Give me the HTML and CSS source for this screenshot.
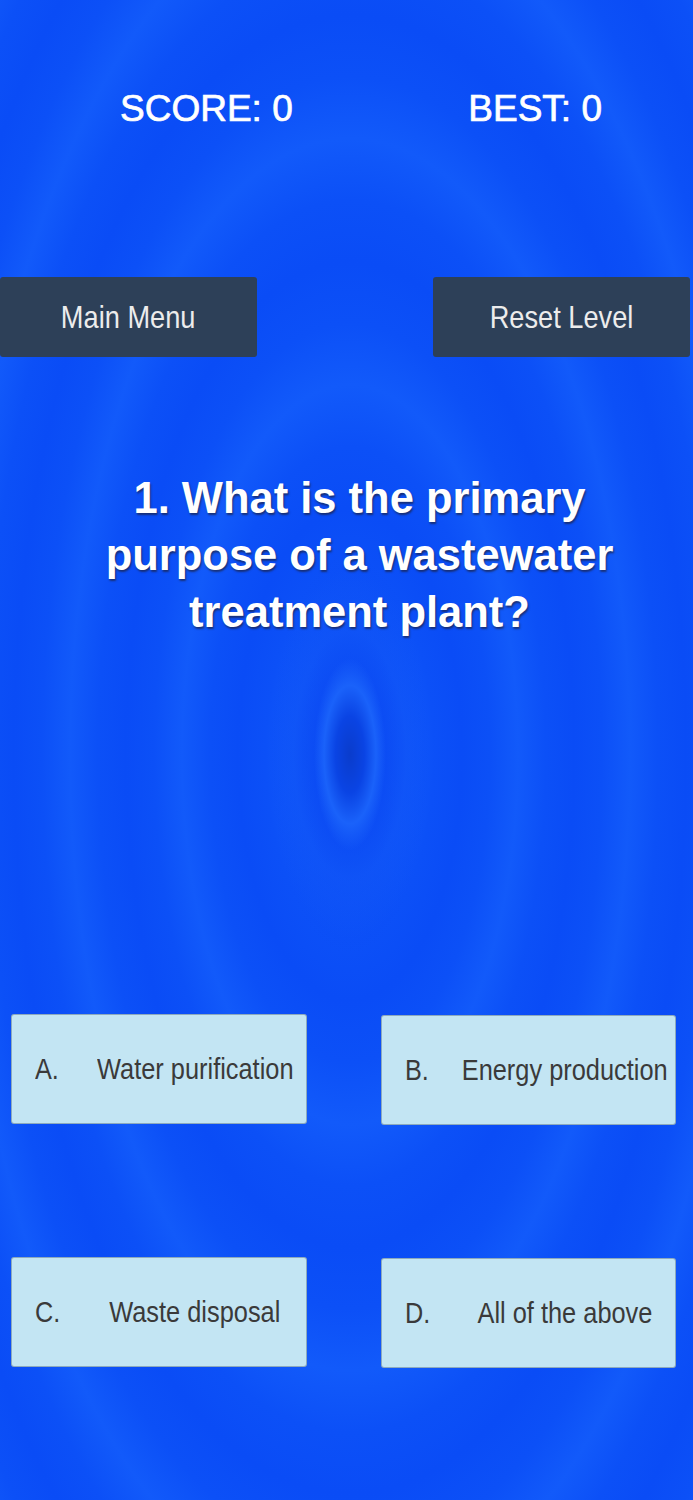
FILE: index.html
```html
<!DOCTYPE html>
<html lang="en">
<head>
  <meta charset="UTF-8">
  <meta name="viewport" content="width=device-width, initial-scale=1.0">
  <title>Water Quiz</title>
  <link rel="stylesheet" href="styles.css">
</head>
<body>
  <div class="screen">
    <div class="scores">
      <span class="score">SCORE: 0</span>
      <span class="score">BEST: 0</span>
    </div>

    <div class="nav">
      <button class="nav-btn"><span class="squish">Main Menu</span></button>
      <button class="nav-btn"><span class="squish">Reset Level</span></button>
    </div>

    <h1 class="question">1. What is the primary purpose of a wastewater treatment plant?</h1>

    <div class="answers">
      <button class="answer">
        <span class="letter">A.</span>
        <span class="answer-text"><span class="squish">Water purification</span></span>
      </button>
      <button class="answer answer-right">
        <span class="letter">B.</span>
        <span class="answer-text"><span class="squish">Energy production</span></span>
      </button>
      <button class="answer">
        <span class="letter">C.</span>
        <span class="answer-text"><span class="squish">Waste disposal</span></span>
      </button>
      <button class="answer answer-right">
        <span class="letter">D.</span>
        <span class="answer-text"><span class="squish">All of the above</span></span>
      </button>
    </div>
  </div>
</body>
</html>
```

FILE: styles.css
```css
body {
  margin: 0;
  padding: 0;
  font-family: "Liberation Sans", Arial, sans-serif;
  background-color: #0a50f7;
}

.screen {
  min-height: 1500px;
  box-sizing: border-box;
  padding-top: 87px;
  background:
    radial-gradient(ellipse 36px 96px at 50.5% 50.3%, #0a3ccc 0%, #0a44e4 40%, #1a62fa 72%, rgba(26, 98, 250, 0) 100%),
    radial-gradient(ellipse 80px 200px at 50.5% 50.3%, rgba(10, 70, 240, 0.9) 0%, rgba(10, 70, 240, 0) 100%),
    repeating-radial-gradient(ellipse 350px 770px at 50.5% 50.3%,
      #0a4cf6 0%, #0c50f7 8%, #125afa 16%, #0c50f7 24%, #0a4cf6 32%),
    #0a50f7;
}

.scores {
  display: flex;
  justify-content: space-between;
  padding: 0 91px 0 120px;
}

.score {
  color: #fff;
  font-size: 37px;
  line-height: 44px;
  -webkit-text-stroke: 0.7px #fff;
}

.nav {
  display: flex;
  justify-content: space-between;
  margin-top: 146px;
  padding-right: 3px;
}

.nav-btn {
  width: 257px;
  height: 80px;
  padding: 0;
  border: none;
  border-radius: 3px;
  background-color: #2d4058;
  color: #ececec;
  font-family: "Liberation Sans", Arial, sans-serif;
  font-size: 32px;
  cursor: pointer;
}

.squish {
  display: inline-block;
  transform: scaleX(0.85);
  white-space: nowrap;
}

.question {
  margin: 113px 0 0;
  padding: 0 64px 0 90px;
  text-align: center;
  color: #fff;
  font-size: 43.5px;
  font-weight: bold;
  line-height: 57px;
  text-shadow: 1px 2px 2px rgba(30, 30, 50, 0.65);
}

.answers {
  display: grid;
  grid-template-columns: 296px 295px;
  column-gap: 74px;
  row-gap: 132px;
  margin-top: 373px;
  padding-left: 11px;
}

.answer {
  display: flex;
  align-items: center;
  height: 110px;
  padding: 0 6px 0 23px;
  border: 1px solid rgba(40, 60, 90, 0.35);
  border-radius: 3px;
  background-color: #c3e5f3;
  color: #3a3a3a;
  font-family: "Liberation Sans", Arial, sans-serif;
  font-size: 29px;
  cursor: pointer;
}

.answer-right {
  margin-top: 1px;
}

.letter {
  width: 55px;
  text-align: left;
  transform: scaleX(0.87);
  transform-origin: left center;
}

.answer-text {
  flex: 1;
  min-width: 0;
  display: flex;
  justify-content: center;
}

.answer .squish {
  transform: scaleX(0.875);
}
```
